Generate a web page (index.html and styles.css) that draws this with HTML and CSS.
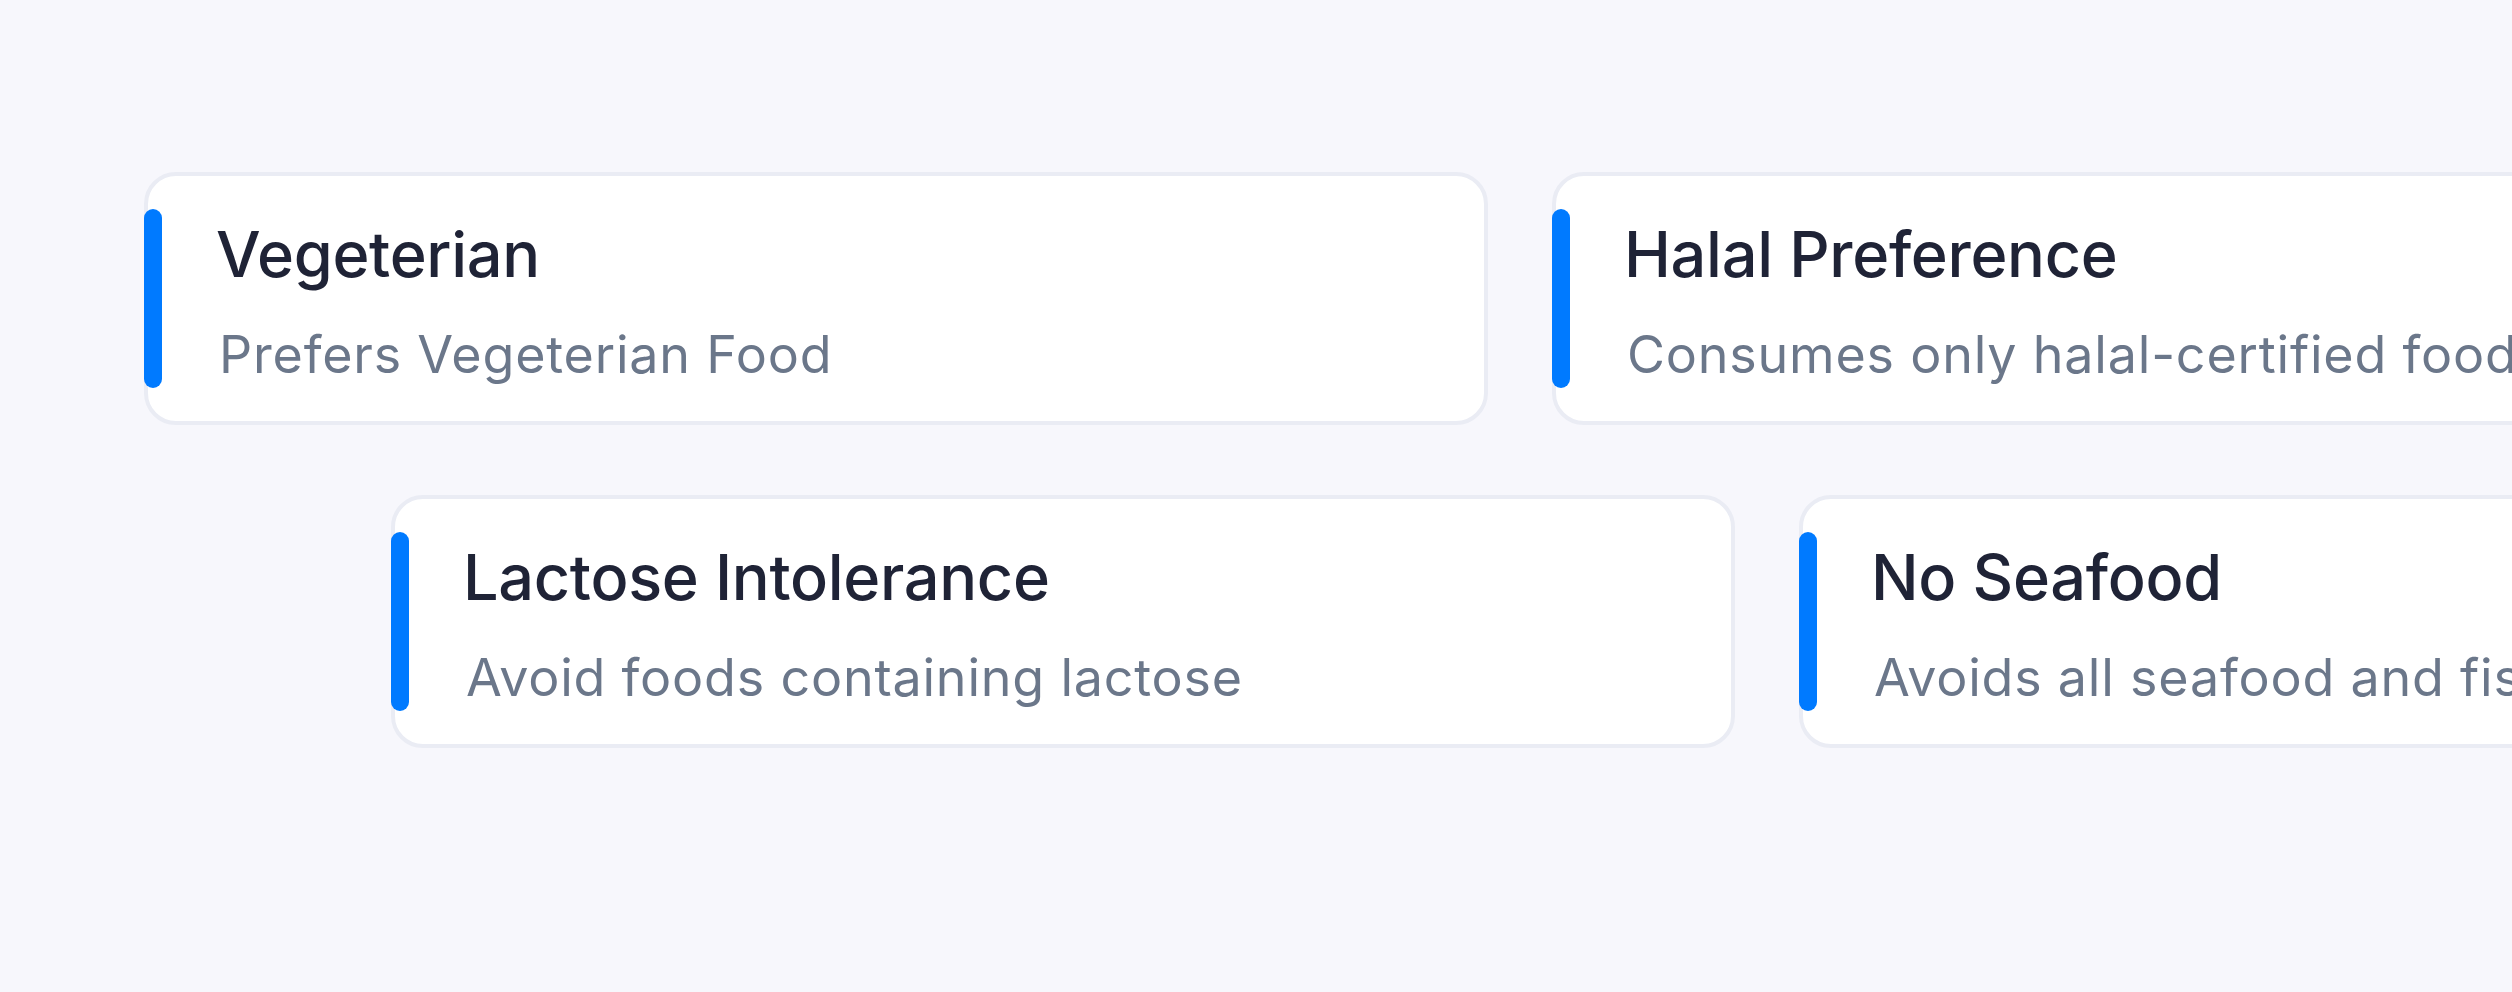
FILE: index.html
```html
<!DOCTYPE html>
<html lang="en">
<head>
<meta charset="utf-8">
<title>Dietary Preferences</title>
<link rel="stylesheet" href="styles.css">
</head>
<body>
<main class="marquee">
  <div class="row row-a">
    <div class="card">
      <span class="accent"></span>
      <h3 class="title">Vegeterian</h3>
      <p class="desc">Prefers Vegeterian Food</p>
    </div>
    <div class="card">
      <span class="accent"></span>
      <h3 class="title">Halal Preference</h3>
      <p class="desc">Consumes only halal-certified food</p>
    </div>
  </div>
  <div class="row row-b">
    <div class="card">
      <span class="accent"></span>
      <h3 class="title">Lactose Intolerance</h3>
      <p class="desc">Avoid foods containing lactose</p>
    </div>
    <div class="card">
      <span class="accent"></span>
      <h3 class="title">No Seafood</h3>
      <p class="desc">Avoids all seafood and fish products</p>
    </div>
  </div>
</main>
</body>
</html>
```
FILE: styles.css
```css
html, body {
  margin: 0;
  padding: 0;
}
body {
  background: #f7f7fc;
  font-family: Inter, "Noto Sans", "Liberation Sans", sans-serif;
  width: 2512px;
  height: 992px;
  overflow: hidden;
}
.marquee {
  display: flex;
  flex-direction: column;
  gap: 70px;
  padding-top: 172px;
}
.row {
  display: flex;
  gap: 64px;
  white-space: nowrap;
}
.row-a {
  margin-left: 144px;
}
.row-b {
  margin-left: 391px;
}
.card {
  position: relative;
  flex: 0 0 1344px;
  box-sizing: border-box;
  background: #ffffff;
  border: 4px solid #eaecf4;
  border-radius: 32px;
  padding: 40px 40px 35px 68px;
}
.accent {
  position: absolute;
  left: -4px;
  top: 33px;
  width: 18px;
  height: 179px;
  border-radius: 9px;
  background: #007aff;
}
.title {
  margin: 0;
  font-size: 63px;
  line-height: 76px;
  font-weight: 500;
  color: #1f2336;
  letter-spacing: -0.3px;
}
.desc {
  margin: 31px 0 0 3px;
  font-size: 52px;
  line-height: 63px;
  font-weight: 400;
  color: #6b778a;
  letter-spacing: 0.8px;
}
```
